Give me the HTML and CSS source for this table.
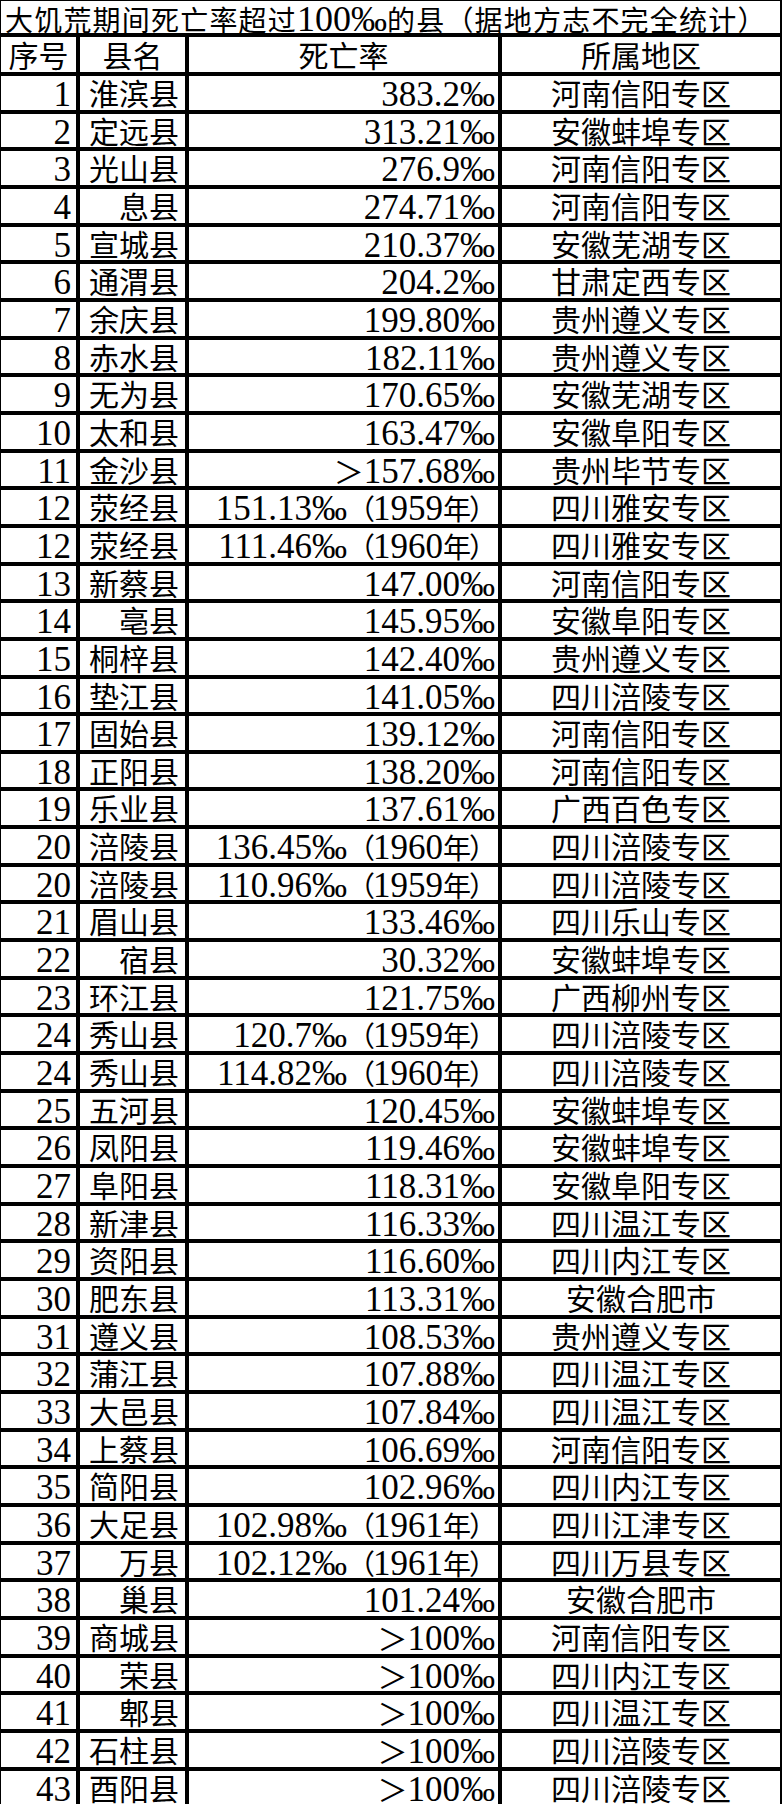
FILE: index.html
```html
<!DOCTYPE html>
<html lang="zh-CN">
<head>
<meta charset="utf-8">
<title>大饥荒期间死亡率超过100‰的县</title>
<link rel="stylesheet" href="styles.css">
</head>
<body>
<div class="sheet">
  <div class="title">大饥荒期间死亡率超过<span class="lat">100‰</span>的县（据地方志不完全统计）</div>

  <div class="hd">序号</div><div class="hd">县名</div><div class="hd">死亡率</div><div class="hd">所属地区</div>

  <div class="no">1</div><div class="name">淮滨县</div><div class="rate">383.2‰</div><div class="area">河南信阳专区</div>
  <div class="no">2</div><div class="name">定远县</div><div class="rate">313.21‰</div><div class="area">安徽蚌埠专区</div>
  <div class="no">3</div><div class="name">光山县</div><div class="rate">276.9‰</div><div class="area">河南信阳专区</div>
  <div class="no">4</div><div class="name">息县</div><div class="rate">274.71‰</div><div class="area">河南信阳专区</div>
  <div class="no">5</div><div class="name">宣城县</div><div class="rate">210.37‰</div><div class="area">安徽芜湖专区</div>
  <div class="no">6</div><div class="name">通渭县</div><div class="rate">204.2‰</div><div class="area">甘肃定西专区</div>
  <div class="no">7</div><div class="name">余庆县</div><div class="rate">199.80‰</div><div class="area">贵州遵义专区</div>
  <div class="no">8</div><div class="name">赤水县</div><div class="rate">182.11‰</div><div class="area">贵州遵义专区</div>
  <div class="no">9</div><div class="name">无为县</div><div class="rate">170.65‰</div><div class="area">安徽芜湖专区</div>
  <div class="no">10</div><div class="name">太和县</div><div class="rate">163.47‰</div><div class="area">安徽阜阳专区</div>
  <div class="no">11</div><div class="name">金沙县</div><div class="rate"><span class="cjk">＞</span>157.68‰</div><div class="area">贵州毕节专区</div>
  <div class="no">12</div><div class="name">荥经县</div><div class="rate">151.13‰<span class="cjk yr">（</span>1959<span class="cjk yr">年）</span></div><div class="area">四川雅安专区</div>
  <div class="no">12</div><div class="name">荥经县</div><div class="rate">111.46‰<span class="cjk yr">（</span>1960<span class="cjk yr">年）</span></div><div class="area">四川雅安专区</div>
  <div class="no">13</div><div class="name">新蔡县</div><div class="rate">147.00‰</div><div class="area">河南信阳专区</div>
  <div class="no">14</div><div class="name">亳县</div><div class="rate">145.95‰</div><div class="area">安徽阜阳专区</div>
  <div class="no">15</div><div class="name">桐梓县</div><div class="rate">142.40‰</div><div class="area">贵州遵义专区</div>
  <div class="no">16</div><div class="name">垫江县</div><div class="rate">141.05‰</div><div class="area">四川涪陵专区</div>
  <div class="no">17</div><div class="name">固始县</div><div class="rate">139.12‰</div><div class="area">河南信阳专区</div>
  <div class="no">18</div><div class="name">正阳县</div><div class="rate">138.20‰</div><div class="area">河南信阳专区</div>
  <div class="no">19</div><div class="name">乐业县</div><div class="rate">137.61‰</div><div class="area">广西百色专区</div>
  <div class="no">20</div><div class="name">涪陵县</div><div class="rate">136.45‰<span class="cjk yr">（</span>1960<span class="cjk yr">年）</span></div><div class="area">四川涪陵专区</div>
  <div class="no">20</div><div class="name">涪陵县</div><div class="rate">110.96‰<span class="cjk yr">（</span>1959<span class="cjk yr">年）</span></div><div class="area">四川涪陵专区</div>
  <div class="no">21</div><div class="name">眉山县</div><div class="rate">133.46‰</div><div class="area">四川乐山专区</div>
  <div class="no">22</div><div class="name">宿县</div><div class="rate">30.32‰</div><div class="area">安徽蚌埠专区</div>
  <div class="no">23</div><div class="name">环江县</div><div class="rate">121.75‰</div><div class="area">广西柳州专区</div>
  <div class="no">24</div><div class="name">秀山县</div><div class="rate">120.7‰<span class="cjk yr">（</span>1959<span class="cjk yr">年）</span></div><div class="area">四川涪陵专区</div>
  <div class="no">24</div><div class="name">秀山县</div><div class="rate">114.82‰<span class="cjk yr">（</span>1960<span class="cjk yr">年）</span></div><div class="area">四川涪陵专区</div>
  <div class="no">25</div><div class="name">五河县</div><div class="rate">120.45‰</div><div class="area">安徽蚌埠专区</div>
  <div class="no">26</div><div class="name">凤阳县</div><div class="rate">119.46‰</div><div class="area">安徽蚌埠专区</div>
  <div class="no">27</div><div class="name">阜阳县</div><div class="rate">118.31‰</div><div class="area">安徽阜阳专区</div>
  <div class="no">28</div><div class="name">新津县</div><div class="rate">116.33‰</div><div class="area">四川温江专区</div>
  <div class="no">29</div><div class="name">资阳县</div><div class="rate">116.60‰</div><div class="area">四川内江专区</div>
  <div class="no">30</div><div class="name">肥东县</div><div class="rate">113.31‰</div><div class="area">安徽合肥市</div>
  <div class="no">31</div><div class="name">遵义县</div><div class="rate">108.53‰</div><div class="area">贵州遵义专区</div>
  <div class="no">32</div><div class="name">蒲江县</div><div class="rate">107.88‰</div><div class="area">四川温江专区</div>
  <div class="no">33</div><div class="name">大邑县</div><div class="rate">107.84‰</div><div class="area">四川温江专区</div>
  <div class="no">34</div><div class="name">上蔡县</div><div class="rate">106.69‰</div><div class="area">河南信阳专区</div>
  <div class="no">35</div><div class="name">简阳县</div><div class="rate">102.96‰</div><div class="area">四川内江专区</div>
  <div class="no">36</div><div class="name">大足县</div><div class="rate">102.98‰<span class="cjk yr">（</span>1961<span class="cjk yr">年）</span></div><div class="area">四川江津专区</div>
  <div class="no">37</div><div class="name">万县</div><div class="rate">102.12‰<span class="cjk yr">（</span>1961<span class="cjk yr">年）</span></div><div class="area">四川万县专区</div>
  <div class="no">38</div><div class="name">巢县</div><div class="rate">101.24‰</div><div class="area">安徽合肥市</div>
  <div class="no">39</div><div class="name">商城县</div><div class="rate"><span class="cjk">＞</span>100‰</div><div class="area">河南信阳专区</div>
  <div class="no">40</div><div class="name">荣县</div><div class="rate"><span class="cjk">＞</span>100‰</div><div class="area">四川内江专区</div>
  <div class="no">41</div><div class="name">郫县</div><div class="rate"><span class="cjk">＞</span>100‰</div><div class="area">四川温江专区</div>
  <div class="no">42</div><div class="name">石柱县</div><div class="rate"><span class="cjk">＞</span>100‰</div><div class="area">四川涪陵专区</div>
  <div class="no">43</div><div class="name">酉阳县</div><div class="rate"><span class="cjk">＞</span>100‰</div><div class="area">四川涪陵专区</div>
</div>
</body>
</html>
```
FILE: styles.css
```css
html, body {
  margin: 0;
  padding: 0;
  background: #fff;
}

body {
  font-family: "Noto Sans CJK SC", sans-serif;
  color: #000;
}

.sheet {
  box-sizing: border-box;
  width: 782px;
  display: grid;
  grid-template-columns: 75px 105px 309px 278px;
  grid-template-rows: 31.5px 35.5px;
  grid-auto-rows: 33.67px;
  column-gap: 4px;
  row-gap: 4px;
  padding: 1px 2px 0 1px;
  background: #000;
}

.sheet > div {
  background: #fff;
  white-space: nowrap;
  line-height: 33.67px;
  font-family: "Noto Sans CJK SC", sans-serif;
  font-size: 30px;
}

.sheet > .title {
  grid-column: 1 / -1;
  padding-left: 4px;
  font-size: 28px;
  letter-spacing: 1.2px;
  line-height: 32px;
}

.title .lat {
  font-family: "Liberation Serif", serif;
  font-size: 36px;
  letter-spacing: 0;
  line-height: 1;
}

.sheet > .hd {
  text-align: center;
  line-height: 35.5px;
}

.sheet > .no {
  box-sizing: border-box;
  text-align: right;
  padding: 2px 5px 0 0;
  font-family: "Liberation Serif", serif;
  font-size: 35px;
}

.sheet > .name {
  text-align: right;
  padding-right: 6px;
}

.sheet > .rate {
  box-sizing: border-box;
  text-align: right;
  padding: 2px 3px 0 0;
  font-family: "Liberation Serif", "Noto Sans CJK SC", serif;
  font-size: 35px;
}

.rate .cjk {
  font-family: "Noto Sans CJK SC", sans-serif;
  font-size: 30px;
  line-height: 1;
}

.rate .yr {
  font-size: 28px;
  letter-spacing: -2px;
}

.sheet > .area {
  text-align: center;
}
```
